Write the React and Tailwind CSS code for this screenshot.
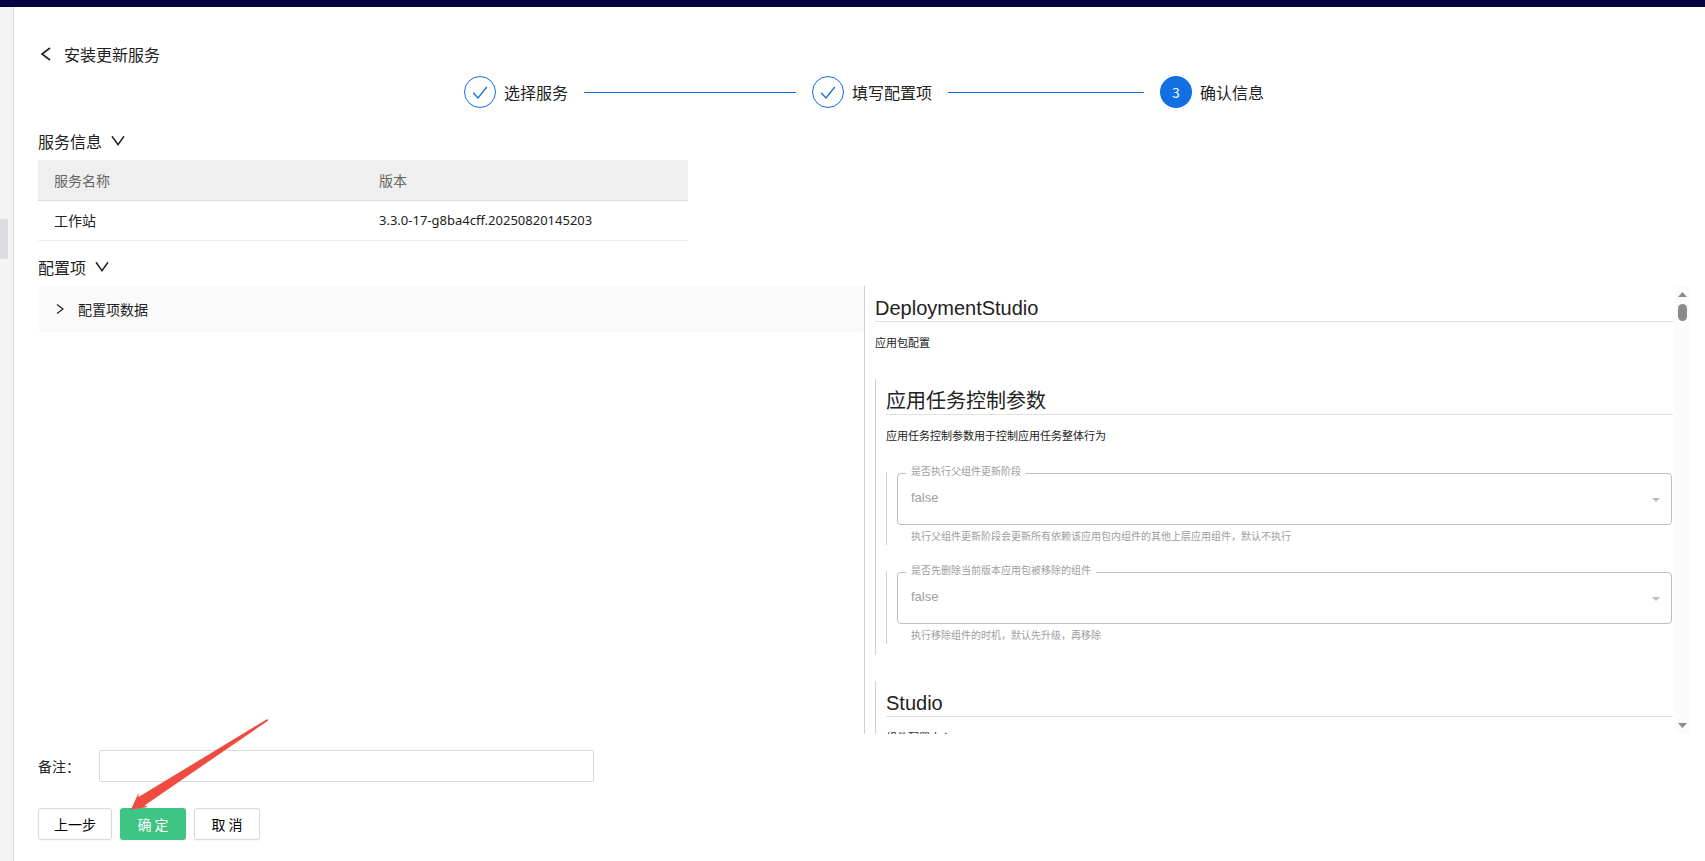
import { useState } from 'react';

const steps = [
  { title: '选择服务', done: true },
  { title: '填写配置项', done: true },
  { title: '确认信息', done: false },
];

const services = [
  { name: '工作站', version: '3.3.0-17-g8ba4cff.20250820145203' },
];

const taskOptions = [
  {
    id: 'run-parent',
    label: '是否执行父组件更新阶段',
    help: '执行父组件更新阶段会更新所有依赖该应用包内组件的其他上层应用组件，默认不执行',
  },
  {
    id: 'remove-first',
    label: '是否先删除当前版本应用包被移除的组件',
    help: '执行移除组件的时机，默认先升级，再移除',
  },
];

function StepIcon({ done, index }) {
  if (!done) {
    return (
      <span className="flex h-8 w-8 shrink-0 items-center justify-center rounded-full bg-[#126ee3] text-white">
        {index + 1}
      </span>
    );
  }
  return (
    <span className="flex h-8 w-8 shrink-0 items-center justify-center rounded-full border border-[#126ee3] text-[#126ee3]">
      <svg width="16" height="16" viewBox="0 0 16 16" fill="none" stroke="currentColor" strokeWidth="1.3">
        <path d="M1.2 8.800 6 14 14.800 3" />
      </svg>
    </span>
  );
}

function Steps() {
  return (
    <ol className="mx-auto flex w-[800px] max-w-full">
      {steps.map((step, i) => {
        const last = i === steps.length - 1;
        return (
          <li
            key={step.title}
            className={last ? 'flex items-center gap-2' : 'flex flex-1 items-center gap-2 pr-4'}
          >
            <StepIcon done={step.done} index={i} />
            <span className="text-base whitespace-nowrap">{step.title}</span>
            {!last && <span className="ml-2 h-px flex-1 bg-[#126ee3]" />}
          </li>
        );
      })}
    </ol>
  );
}

function SectionTitle({ children, open, onClick }) {
  return (
    <button
      type="button"
      aria-expanded={open}
      onClick={onClick}
      className="flex items-center gap-2 self-start text-base leading-6"
    >
      {children}
      <svg width="16" height="16" viewBox="0 0 16 16" fill="none" stroke="currentColor" strokeWidth="1.5">
        <path d="M2 3.2 8 11.7 14 3.2" />
      </svg>
    </button>
  );
}

function ServiceTable() {
  return (
    <table className="mt-[7px] w-[650px] max-w-full shrink-0 table-fixed border-collapse text-left">
      <thead>
        <tr className="h-10 border-b border-[#dcdcdc] bg-[#efefef] text-[#666]">
          <th className="px-4 font-normal">服务名称</th>
          <th className="px-4 font-normal">版本</th>
        </tr>
      </thead>
      <tbody>
        {services.map((s) => (
          <tr key={s.name} className="h-10 border-b border-[#ededed]">
            <td className="px-4">{s.name}</td>
            <td className="px-4 font-['Noto_Sans',sans-serif] text-[13px]">{s.version}</td>
          </tr>
        ))}
      </tbody>
    </table>
  );
}

function OptionField({ id, label, help }) {
  return (
    <div className="border-l border-[#d0d0d8] py-px pl-[10px] text-[#9e9e9e]">
      <div className="relative flex h-13 rounded border border-[#bdbdbd]">
        <label
          htmlFor={id}
          className="absolute -top-[9px] left-2 bg-white px-[5px] text-[10px] leading-3"
        >
          {label}
        </label>
        <select
          id={id}
          disabled
          className="w-full appearance-none px-[13px] font-['Liberation_Sans',Arial,sans-serif] text-[13px]"
        >
          <option>false</option>
          <option>true</option>
        </select>
        <svg
          className="pointer-events-none absolute top-6 right-[11px] text-[#bdbdbd]"
          width="8"
          height="4"
          viewBox="0 0 8 4"
          fill="currentColor"
        >
          <path d="M0 0h8L4 4z" />
        </svg>
      </div>
      <p className="mt-[3px] px-[14px] text-[10px] leading-4">{help}</p>
    </div>
  );
}

function Heading({ children }) {
  return (
    <h2 className="border-b border-[#e0e0e0] font-['Liberation_Sans','Noto_Sans_CJK_SC',sans-serif] text-xl leading-[26px]">
      {children}
    </h2>
  );
}

function SchemaForm() {
  return (
    <div className="min-w-0 flex-1 overflow-hidden pt-[9px] pr-px pl-[10px]">
      <Heading>DeploymentStudio</Heading>
      <p className="mt-[10px] text-[11px] leading-5">应用包配置</p>
      <div className="mt-[27px] border-l border-[#d0d0d8] pt-[9px] pr-px pb-[11px] pl-[10px]">
        <Heading>应用任务控制参数</Heading>
        <p className="mt-[10px] text-[11px] leading-5">
          应用任务控制参数用于控制应用任务整体行为
        </p>
        <div className="mt-[27px] flex flex-col gap-[26px] pr-px">
          {taskOptions.map((o) => (
            <OptionField key={o.id} {...o} />
          ))}
        </div>
      </div>
      <div className="mt-[26px] border-l border-[#d0d0d8] pt-[9px] pr-px pl-[10px]">
        <Heading>Studio</Heading>
        <p className="mt-[10px] text-[11px] leading-5">组件配置中心</p>
      </div>
    </div>
  );
}

function ScrollTrack() {
  return (
    <div className="flex w-[15px] shrink-0 flex-col items-center bg-[#fbfbfb] py-[6px] text-[#8b8b8b]">
      <svg width="9" height="5" viewBox="0 0 9 5" fill="currentColor">
        <path d="M0 5h9L4.500 0z" />
      </svg>
      <span className="mt-[7px] h-[17px] w-[9px] rounded-full bg-[#8b8b8b]" />
      <svg className="mt-auto" width="9" height="5" viewBox="0 0 9 5" fill="currentColor">
        <path d="M0 0h9L4.500 5z" />
      </svg>
    </div>
  );
}

export default function App() {
  const [showInfo, setShowInfo] = useState(true);
  const [showConfig, setShowConfig] = useState(true);
  const [remark, setRemark] = useState('');

  return (
    <div className="flex h-screen flex-col bg-white font-['Noto_Sans_CJK_SC',sans-serif] text-sm text-[#222]">
      <header className="h-[7px] shrink-0 bg-[#080440]" />
      <div className="flex min-h-0 flex-1">
        <aside className="w-[14px] shrink-0 border-r border-[#d9d9d9] bg-[#f4f4f4] pt-[212px]">
          <div className="h-10 w-2 rounded-r-xs bg-[#dcdde2]" />
        </aside>

        <main className="flex min-w-0 flex-1 flex-col pt-[35px] pr-[15px] pb-[21px] pl-6">
          <div className="flex items-center gap-[10px] text-base leading-6">
            <button type="button" aria-label="返回">
              <svg width="16" height="16" viewBox="0 0 16 16" fill="none" stroke="currentColor" strokeWidth="1.6">
                <path d="M12 2 4 8l8 6" />
              </svg>
            </button>
            <h1>安装更新服务</h1>
          </div>

          <div className="mt-[10px]">
            <Steps />
          </div>

          <div className="mt-5 flex flex-col pt-px">
            <SectionTitle open={showInfo} onClick={() => setShowInfo(!showInfo)}>
              服务信息
            </SectionTitle>
            {showInfo && <ServiceTable />}
          </div>

          <div className="mt-[14px] flex min-h-0 flex-1 flex-col">
            <SectionTitle open={showConfig} onClick={() => setShowConfig(!showConfig)}>
              配置项
            </SectionTitle>
            {showConfig && (
              <div className="mt-[7px] flex min-h-0 flex-1">
                <div className="w-1/2">
                  <button
                    type="button"
                    className="flex h-[46px] w-full items-center gap-3 rounded-sm bg-[#fafafa] px-4"
                  >
                    <svg width="12" height="12" viewBox="0 0 12 12" fill="none" stroke="currentColor" strokeWidth="1.2">
                      <path d="M3 1.500 9 6l-6 4.500" />
                    </svg>
                    配置项数据
                  </button>
                </div>
                <div className="flex w-1/2 border-l border-[#d0d0d8]">
                  <SchemaForm />
                  <ScrollTrack />
                </div>
              </div>
            )}
          </div>

          <div className="mt-4 flex items-center">
            <label htmlFor="remark" className="w-[61px] shrink-0">
              备注：
            </label>
            <input
              id="remark"
              type="text"
              value={remark}
              onChange={(e) => setRemark(e.target.value)}
              className="h-8 w-[495px] rounded-xs border border-[#d9d9d9] px-3 outline-none"
            />
          </div>

          <div className="mt-[26px] flex gap-2 text-black">
            <button type="button" className="h-8 rounded-[3px] border border-[#d9d9d9] px-[15px] shadow-xs">
              上一步
            </button>
            <div className="relative">
              <button type="button" className="h-8 w-[66px] rounded-[3px] bg-[#3ec483] text-white shadow-xs">
                确 定
              </button>
              <svg
                className="pointer-events-none absolute bottom-[30px] left-[10px]"
                width="140"
                height="92"
                viewBox="0 0 140 92"
                fill="#f04b40"
              >
                <path d="M1 91.500 8.500 75 8.500 79 136.500 1.500Q139.500 .5 137.500 3L14.500 87.500 18 89z" />
              </svg>
            </div>
            <button type="button" className="h-8 w-[66px] rounded-[3px] border border-[#d9d9d9] shadow-xs">
              取 消
            </button>
          </div>
        </main>
      </div>
    </div>
  );
}
